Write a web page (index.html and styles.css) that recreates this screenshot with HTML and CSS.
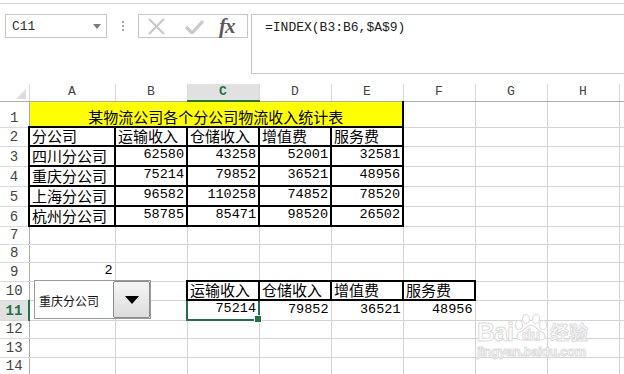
FILE: index.html
```html
<!DOCTYPE html>
<html lang="zh-CN">
<head>
    <meta charset="UTF-8">
    <title>Excel INDEX</title>
    <link rel="stylesheet" href="styles.css">
</head>
<body>
    <div class="topline"></div>

    <!-- formula bar -->
    <div class="fbar">
        <div class="namebox">
            <span>C11</span>
            <svg class="nb-arrow" width="8" height="5" viewBox="0 0 8 5"><polygon points="0,0 8,0 4,5" fill="#7a7a7a"/></svg>
        </div>
        <div class="grip"><i></i><i></i><i></i></div>
        <div class="fbtns">
            <svg class="ico-x" width="17" height="17" viewBox="0 0 17 17"><path d="M1 1 L16 16 M16 1 L1 16" stroke="#c9c9c9" stroke-width="2.2" fill="none"/></svg>
            <svg class="ico-ok" width="19" height="15" viewBox="0 0 19 15"><path d="M1 8 L7 14 L18 2" stroke="#c9c9c9" stroke-width="3.2" fill="none"/></svg>
            <span class="fx">fx</span>
        </div>
        <div class="formula">=INDEX(B3:B6,$A$9)</div>
    </div>

    <!-- sheet -->
    <div class="sheet">
        <table class="grid">
            <colgroup>
                <col class="c-hd"><col class="c-a"><col class="c-n"><col class="c-n"><col class="c-n">
                <col class="c-n"><col class="c-n"><col class="c-n"><col class="c-n"><col class="c-i">
            </colgroup>
            <tr class="r-head">
                <th class="corner"><svg width="10" height="10" viewBox="0 0 10 10"><polygon points="10,0 10,10 0,10" fill="#dcdcdc"/></svg></th>
                <th>A</th><th>B</th><th class="sel sel-col">C</th><th>D</th><th>E</th><th>F</th><th>G</th><th>H</th><th></th>
            </tr>
            <tr class="r26">
                <th class="rh">1</th>
                <td class="title" colspan="5">某物流公司各个分公司物流收入统计表</td>
                <td></td><td></td><td></td><td></td>
            </tr>
            <tr class="r19">
                <th class="rh">2</th>
                <td class="b">分公司</td><td class="b">运输收入</td><td class="b">仓储收入</td><td class="b">增值费</td><td class="b">服务费</td>
                <td></td><td></td><td></td><td></td>
            </tr>
            <tr class="r20">
                <th class="rh">3</th>
                <td class="b">四川分公司</td><td class="b n">62580</td><td class="b n">43258</td><td class="b n">52001</td><td class="b n">32581</td>
                <td></td><td></td><td></td><td></td>
            </tr>
            <tr class="r19">
                <th class="rh">4</th>
                <td class="b">重庆分公司</td><td class="b n">75214</td><td class="b n">79852</td><td class="b n">36521</td><td class="b n">48956</td>
                <td></td><td></td><td></td><td></td>
            </tr>
            <tr class="r19">
                <th class="rh">5</th>
                <td class="b">上海分公司</td><td class="b n">96582</td><td class="b n">110258</td><td class="b n">74852</td><td class="b n">78520</td>
                <td></td><td></td><td></td><td></td>
            </tr>
            <tr class="r19">
                <th class="rh">6</th>
                <td class="b">杭州分公司</td><td class="b n">58785</td><td class="b n">85471</td><td class="b n">98520</td><td class="b n">26502</td>
                <td></td><td></td><td></td><td></td>
            </tr>
            <tr class="r18">
                <th class="rh">7</th>
                <td></td><td></td><td></td><td></td><td></td><td></td><td></td><td></td><td></td>
            </tr>
            <tr class="r18">
                <th class="rh">8</th>
                <td></td><td></td><td></td><td></td><td></td><td></td><td></td><td></td><td></td>
            </tr>
            <tr class="r18">
                <th class="rh">9</th>
                <td class="n">2</td><td></td><td></td><td></td><td></td><td></td><td></td><td></td><td></td>
            </tr>
            <tr class="r19">
                <th class="rh">10</th>
                <td></td><td></td>
                <td class="b">运输收入</td><td class="b">仓储收入</td><td class="b">增值费</td><td class="b">服务费</td>
                <td></td><td></td><td></td>
            </tr>
            <tr class="r19">
                <th class="rh sel sel-row">11</th>
                <td></td><td></td>
                <td class="n cur">75214</td><td class="n">79852</td><td class="n">36521</td><td class="n">48956</td>
                <td></td><td></td><td></td>
            </tr>
            <tr class="r18">
                <th class="rh">12</th>
                <td></td><td></td><td></td><td></td><td></td><td></td><td></td><td></td><td></td>
            </tr>
            <tr class="r19">
                <th class="rh">13</th>
                <td></td><td></td><td></td><td></td><td></td><td></td><td></td><td></td><td></td>
            </tr>
            <tr class="r18">
                <th class="rh">14</th>
                <td></td><td></td><td></td><td></td><td></td><td></td><td></td><td></td><td></td>
            </tr>
        </table>

        <!-- form control combo box floating over the sheet -->
        <div class="combo">
            <span class="combo-text">重庆分公司</span>
            <div class="combo-btn">
                <svg width="14" height="8" viewBox="0 0 14 8"><polygon points="0,0 14,0 7,8" fill="#000"/></svg>
            </div>
        </div>

        <!-- watermark -->
        <div class="wm">
            <div class="wm-top">
                <span class="wm-bai">Bai</span>
                <span class="wm-paw">
                    <svg width="36" height="28" viewBox="0 0 36 28">
                        <g fill="#fff" stroke="#dedede" stroke-width="1.2">
                            <ellipse cx="6" cy="11" rx="3.5" ry="4.5"/>
                            <ellipse cx="13" cy="5" rx="3.5" ry="4.5"/>
                            <ellipse cx="23" cy="5" rx="3.5" ry="4.5"/>
                            <ellipse cx="30" cy="11" rx="3.5" ry="4.5"/>
                            <path d="M8 26 C2 26 3 19 9 17 C13 15 14 11 18 11 C22 11 23 15 27 17 C33 19 34 26 28 26 Z"/>
                        </g>
                    </svg>
                    <span class="wm-du">du</span>
                </span>
                <span class="wm-jy">经验</span>
            </div>
            <div class="wm-url">jingyan.baidu.com</div>
        </div>
    </div>
</body>
</html>
```

FILE: styles.css
```css
/* Basic Reset */
* {
    margin: 0;
    padding: 0;
    box-sizing: border-box;
}

html, body {
    width: 624px;
    height: 374px;
    overflow: hidden;
}

body {
    background: #fff;
    font-family: "Liberation Mono", monospace;
    color: #000;
}

/* Formula bar */
.topline {
    height: 4px;
    border-bottom: 1px solid #d6d6d6;
}

.fbar {
    display: flex;
    align-items: flex-start;
    padding-top: 10px;
    width: 640px;
}

.namebox {
    margin-left: 5px;
    width: 102px;
    height: 24px;
    border: 1px solid #c6c6c6;
    display: flex;
    align-items: center;
    justify-content: space-between;
    padding: 0 5px 0 6px;
    font-size: 13px;
    color: #333;
}

.nb-arrow {
    margin-top: 1px;
}

.grip {
    width: 31px;
    height: 24px;
    display: flex;
    flex-direction: column;
    align-items: center;
    justify-content: center;
    gap: 2px;
}

.grip i {
    width: 2px;
    height: 2px;
    background: #a5a5a5;
}

.fbtns {
    width: 110px;
    height: 24px;
    border: 1px solid #c6c6c6;
    display: flex;
    align-items: center;
    padding-left: 9px;
}

.ico-x {
    margin-right: 20px;
}

.ico-ok {
    margin-right: 15px;
}

.fx {
    font-family: "Liberation Serif", serif;
    font-style: italic;
    font-weight: bold;
    font-size: 21px;
    color: #5a5a5a;
    letter-spacing: -1px;
    line-height: 20px;
}

.formula {
    margin-left: 3px;
    flex: 1;
    height: 60px;
    border: 1px solid #c6c6c6;
    border-right: none;
    padding: 5px 0 0 13px;
    font-size: 13px;
    line-height: 16px;
    color: #222;
}

/* Sheet grid */
.sheet {
    position: relative;
    margin-top: 10px;
}

.grid {
    border-collapse: collapse;
    table-layout: fixed;
    width: 649px;
}

.c-hd { width: 29px; }
.c-a { width: 86px; }
.c-n { width: 72px; }
.c-i { width: 30px; }

.r-head { height: 17px; }
.r26 { height: 26px; }
.r20 { height: 20px; }
.r19 { height: 19px; }
.r18 { height: 18px; }

.grid th {
    font-weight: normal;
    font-size: 13px;
    color: #444;
    background: #fff;
    text-align: center;
    vertical-align: middle;
    line-height: 14px;
    border-right: 1px solid #dadada;
    border-bottom: 1px solid #ababab;
    padding: 0;
}

.grid th.corner {
    text-align: right;
    vertical-align: bottom;
    padding: 0 3px 2px 0;
}

.grid th.corner svg {
    display: block;
    margin-left: auto;
}

.grid th.rh {
    border-right: 1px solid #ababab;
    border-bottom: 1px solid #dadada;
    vertical-align: bottom;
    font-size: 14px;
    line-height: 17px;
}

.grid th.sel {
    background: #e1e1e1;
    color: #217346;
    font-weight: bold;
}

.grid th.sel-col {
    border-bottom: 2px solid #217346;
}

.grid th.sel-row {
    border-right: 2px solid #217346;
}

.grid td {
    border: 1px solid #d4d4d4;
    font-family: "Noto Sans CJK SC", sans-serif;
    font-size: 15px;
    line-height: 16px;
    padding: 0 2px 1px 2px;
    vertical-align: bottom;
    white-space: nowrap;
}

.grid td.title {
    background: #ffff00;
    text-align: center;
    border-right: 2px solid #000;
    border-bottom: 2px solid #000;
    padding-bottom: 1px;
}

.grid td.b {
    border: 2px solid #000;
}

.grid td.n {
    font-family: "Liberation Mono", monospace;
    font-size: 13.5px;
    text-align: right;
    padding-bottom: 2px;
}

.grid td.cur {
    border: 2px solid #217346;
    position: relative;
}

.grid td.cur::after {
    content: "";
    position: absolute;
    right: -4px;
    bottom: -4px;
    width: 6px;
    height: 6px;
    background: #217346;
    border: 1px solid #fff;
}

/* Combo box control */
.combo {
    position: absolute;
    left: 34px;
    top: 196px;
    width: 117px;
    height: 39px;
    background: #fff;
    border: 1px solid #9a9a9a;
    display: flex;
    align-items: center;
    justify-content: space-between;
    padding-left: 4px;
}

.combo-text {
    font-family: "Noto Sans CJK SC", sans-serif;
    font-size: 12px;
    color: #111;
    margin-top: 1px;
}

.combo-btn {
    width: 37px;
    height: 37px;
    border: 1px solid #8c8c8c;
    border-radius: 2px;
    background: linear-gradient(#f5f5f5, #dcdcdc);
    display: flex;
    align-items: center;
    justify-content: center;
}

/* Watermark */
.wm {
    position: absolute;
    left: 477px;
    top: 219px;
    width: 115px;
    font-family: "Liberation Sans", sans-serif;
    font-weight: bold;
    color: #fff;
    -webkit-text-stroke: 1px #dcdcdc;
}

.wm-top {
    display: flex;
    align-items: flex-end;
    height: 40px;
}

.wm-bai {
    font-size: 25px;
    line-height: 22px;
    letter-spacing: -1px;
}

.wm-paw {
    position: relative;
    width: 37px;
    height: 30px;
}

.wm-paw svg {
    display: block;
    margin-top: 1px;
}

.wm-du {
    position: absolute;
    left: 9px;
    bottom: 1px;
    font-size: 15px;
    line-height: 14px;
}

.wm-jy {
    font-family: "Noto Sans CJK SC", sans-serif;
    font-size: 19px;
    line-height: 22px;
}

.wm-url {
    font-size: 13px;
    line-height: 14px;
    margin-top: 2px;
    letter-spacing: -0.3px;
}
```
